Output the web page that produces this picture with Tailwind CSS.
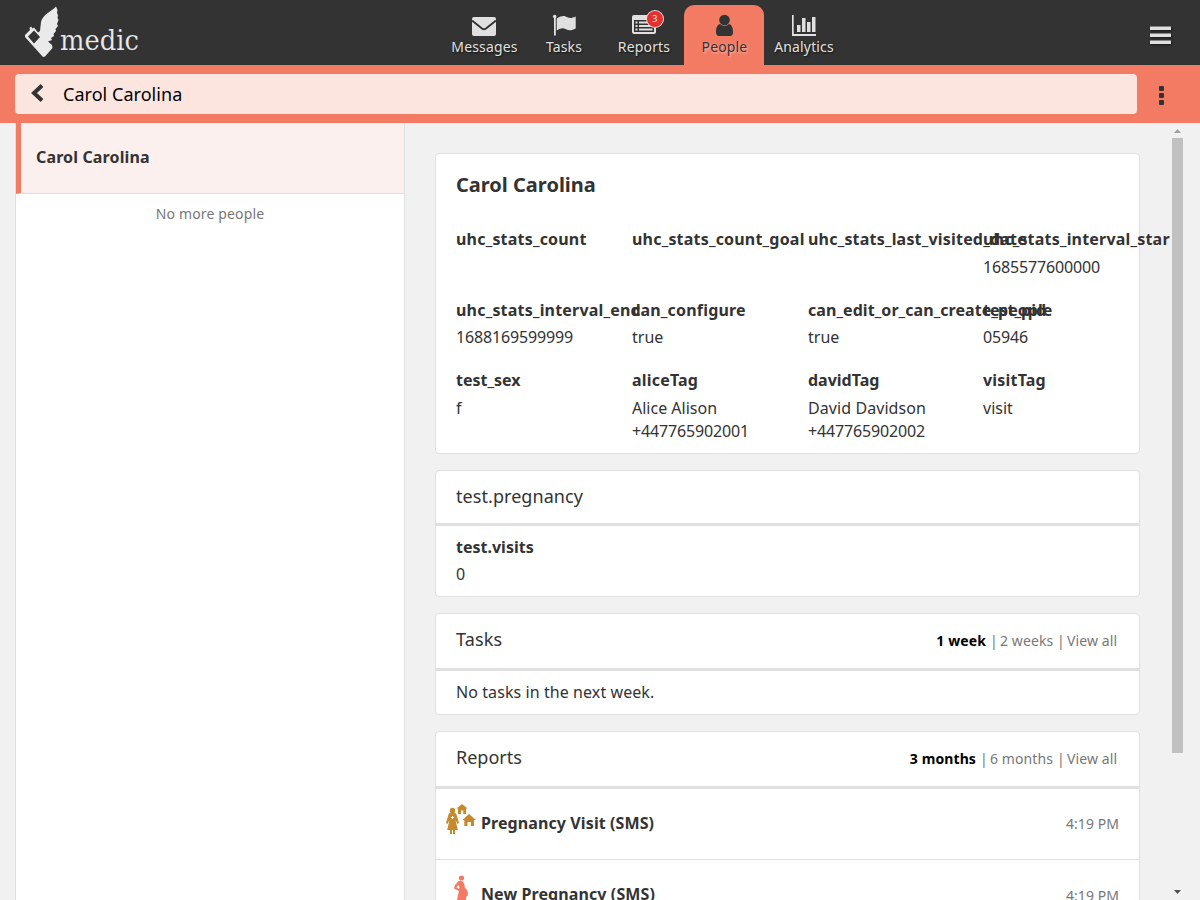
<!DOCTYPE html>
<html lang="en">
<head>
<meta charset="utf-8">
<title>Medic</title>
<script src="https://cdn.jsdelivr.net/npm/@tailwindcss/browser@4"></script>
</head>
<body class="w-[1200px] h-[900px] overflow-hidden bg-[#f1f1f1] text-[#333] text-base leading-[23px] font-['Noto_Sans',sans-serif] flex flex-col">
<header class="relative h-[65px] shrink-0 bg-[#333] text-[#e0e0e0]">
  <svg class="absolute left-0 top-0" width="150" height="65" viewBox="0 0 150 65" fill="#eaeaea">
    <path d="M56 6.500C51 12 43 14 41 22L40 31L38 32.500L34 27.500L32.500 28.500L31 26.500L29.500 28L30 30L25 35L25 37L43 57L45 56.500L52.500 48L52 45L48 41.500L52 40L51 38L54 36L53.500 34L56 31L55.500 29L58 26L57 24L58.500 20L57.500 18L58 15L57 13L57.500 10ZM34 30.500L40 37L34 43.500L28 36.500Z" fill-rule="evenodd"/>
    <text x="60" y="50" font-size="27" textLength="79" lengthAdjust="spacingAndGlyphs" font-family="DejaVu Serif, serif" stroke="#333" stroke-width=".15">medic</text>
  </svg>
  <nav class="flex h-full pl-[444px] pt-[5px] text-sm leading-[20px] text-center tracking-[.15px] [text-shadow:1px_1px_2px_rgba(0,0,0,.7)]">
    <a class="w-20 flex flex-col items-center pt-[8px]"><svg class="h-6 w-6 shrink-0" viewBox="0 0 24 24"><rect y="4" width="24" height="19" rx="2" fill="#e0e0e0"/><path d="M0 7.500L10 15.500Q12 17 14 15.500L24 7.500" fill="none" stroke="#333" stroke-width="1.800"/></svg><span class="pl-px">Messages</span></a>
    <a class="w-20 flex flex-col items-center pt-[8px]"><svg class="h-6 w-6 shrink-0" viewBox="0 0 24 24" fill="#e0e0e0"><circle cx="2.700" cy="3.500" r="1.800"/><path d="M2 4h1.800v18.500H2zM4.700 5.500C11 1.500 13 3 15.500 4.300S20 5 23.700 3.500V15.500C20 17.500 17 18 14 16.300S9 15 4.700 17.500Z"/></svg>Tasks</a>
    <a class="relative w-20 flex flex-col items-center pt-[8px]"><svg class="h-6 w-6 shrink-0" viewBox="0 0 24 24"><path fill="#e0e0e0" fill-rule="evenodd" d="M2 2H22Q24 2 24 4V19Q24 21 22 21H2Q0 21 0 19V4Q0 2 2 2ZM2 7V19H22V7Z"/><path fill="#e0e0e0" d="M3.500 8.500h2v2h-2zM3.500 12h2v2h-2zM3.500 15.500h2v2h-2zM7 8.500h13.500v2H7zM7 12h13.500v2H7zM7 15.500h13.500v2H7z"/></svg>Reports<span class="absolute left-[42px] top-[5px] size-[18px] rounded-full bg-[#e33030] border border-white/80 text-white/90 text-[9px] leading-[16px] [text-shadow:none]">3</span></a>
    <a class="w-20 flex flex-col items-center pt-[8px] rounded-t-[10px] bg-[#f47b63] text-[#333] [text-shadow:1px_1px_2px_rgba(255,255,255,.5)]"><svg class="h-6 w-6 shrink-0" viewBox="0 0 24 24" fill="#333"><circle cx="12.500" cy="7" r="5.300"/><path d="M8 11Q12.500 15 17 11C20 12 21 15 21 19Q21 23 18 23H7Q4 23 4 19C4 15 5 12 8 11Z"/></svg><span class="pl-px">People</span></a>
    <a class="w-20 flex flex-col items-center pt-[8px]"><svg class="h-6 w-6 shrink-0" viewBox="0 0 24 24" fill="#e0e0e0"><path d="M0 2h1.700v19H24v2H0zM5 12h3.500v7H5zM10 5h3.500v14H10zM15 9h3.500v10H15zM20 4h3.500v15H20z"/></svg>Analytics</a>
  </nav>
  <svg class="absolute left-[1150px] top-[26px] drop-shadow-[1px_1px_1px_#0008]" width="22" height="20" fill="#e0e0e0"><path d="M0 .5h21v3.500H0zM0 7.500h21V11H0zM0 14.500h21V18H0z"/></svg>
</header>
<section class="h-[58px] shrink-0 bg-[#f47b63] flex pl-[15px] pt-[9px]">
  <div class="w-[1122px] h-10 rounded bg-[#fde5df] flex items-center text-lg text-black pl-[16px] tracking-[.04px]">
    <svg class="mr-[19px] -mt-[2px] shrink-0" width="13" height="18" viewBox="0 0 13 18"><path d="M11 1.500L3 9L11 16.500" fill="none" stroke="#333" stroke-width="4"/></svg>Carol Carolina
  </div>
  <svg class="ml-[22px] mt-[12px]" width="5" height="20" fill="#333"><rect width="5" height="5" rx="1"/><rect y="7" width="5" height="5" rx="1"/><rect y="14" width="5" height="5" rx="1"/></svg>
</section>
<main class="flex h-[777px] pl-[15px]">
  <aside class="w-[390px] shrink-0 bg-white border-x border-[#e0e0e0]">
    <div class="h-[71px] bg-[#fcf0ee] border-b border-b-[#e0e0e0] border-l-[5px] border-l-[#f47b63] pl-[15px] pt-[23px] font-bold tracking-[.14px]">Carol Carolina</div>
    <p class="pt-[10px] text-center text-sm leading-5 text-[#777] tracking-[.14px]">No more people</p>
  </aside>
  <div class="w-[767px] h-full overflow-hidden pl-[30px] pt-[30px] shrink-0">
    <section class="w-[705px] h-[301px] border border-[#e0e0e0] rounded bg-white px-5 pt-[19px] mb-4">
      <h2 class="text-xl leading-6 font-bold">Carol Carolina</h2>
      <dl class="mt-[31px] grid grid-cols-[176px_176px_175px_187px] auto-rows-[70.5px] [&_dt]:font-bold [&_dt]:mb-[5px] [&_dt]:tracking-[.19px] whitespace-nowrap">
        <div><dt>uhc_stats_count</dt></div>
        <div><dt>uhc_stats_count_goal</dt></div>
        <div><dt>uhc_stats_last_visited_date</dt></div>
        <div class="overflow-hidden"><dt>uhc_stats_interval_star</dt><dd class="tracking-[-.15px]">1685577600000</dd></div>
        <div><dt>uhc_stats_interval_end</dt><dd class="-mt-px tracking-[-.15px]">1688169599999</dd></div>
        <div><dt>can_configure</dt><dd class="-mt-px">true</dd></div>
        <div><dt class="tracking-[.06px]!">can_edit_or_can_create_people</dt><dd class="-mt-px">true</dd></div>
        <div><dt class="tracking-normal!">test_pid</dt><dd class="-mt-px tracking-[-.15px]">05946</dd></div>
        <div><dt class="tracking-normal!">test_sex</dt><dd>f</dd></div>
        <div><dt>aliceTag</dt><dd>Alice Alison<br><span class="tracking-[-.15px]">+447765902001</span></dd></div>
        <div><dt class="tracking-normal!">davidTag</dt><dd><span class="tracking-[.08px]">David Davidson</span><br><span class="tracking-[-.15px]">+447765902002</span></dd></div>
        <div><dt>visitTag</dt><dd>visit</dd></div>
      </dl>
    </section>
    <section class="w-[705px] h-[127px] border border-[#e0e0e0] rounded bg-white mb-4">
      <h3 class="h-[55px] border-b-3 border-[#e0e0e0] pl-5 pt-[13px] text-lg leading-6 tracking-[.06px]">test.pregnancy</h3>
      <div class="pl-5 pt-[10px]"><p class="font-bold mb-1">test.visits</p><p>0</p></div>
    </section>
    <section class="w-[705px] h-[102px] border border-[#e0e0e0] rounded bg-white mb-4">
      <div class="h-[57px] border-b-3 border-[#e0e0e0] pl-5 pr-[21px] pt-[13px] flex justify-between">
        <h3 class="text-lg leading-6 tracking-[.15px]">Tasks</h3>
        <p class="text-sm leading-7 text-[#777] flex whitespace-nowrap tracking-[.1px]"><b class="text-black mr-[4px]">1 week</b><span class="w-[10px]">|</span><span class="w-[53px] mr-[4px]">2 weeks</span><span class="w-[10px]">|</span><span class="w-[51px]">View all</span></p>
      </div>
      <p class="pl-5 pt-[10px] tracking-[.08px]">No tasks in the next week.</p>
    </section>
    <section class="w-[705px] h-[240px] border border-[#e0e0e0] rounded bg-white">
      <div class="h-[57px] border-b-3 border-[#e0e0e0] pl-5 pr-[21px] pt-[13px] flex justify-between">
        <h3 class="text-lg leading-6">Reports</h3>
        <p class="text-sm leading-7 text-[#777] flex whitespace-nowrap tracking-[.1px]"><b class="text-black mr-[4px]">3 months</b><span class="w-[10px]">|</span><span class="w-[63px] mr-[4px]">6 months</span><span class="w-[10px]">|</span><span class="w-[51px]">View all</span></p>
      </div>
      <div class="h-[71px] border-b border-[#e0e0e0] flex items-center pl-[10px] pr-5">
        <svg class="mr-[5px] -mt-[10px]" width="30" height="30" viewBox="0 0 30 30" fill="#c78a2b"><circle cx="6.500" cy="6.500" r="2.700"/><path d="M4.500 8.500H8.500Q10.500 9 11.200 13L13 19L11.500 20L9.500 16L11.800 26H9V30H7V26H6V30H4V26H1.200L3.500 16L1.500 20L0 19L1.800 13Q2.500 9 4.500 8.500ZM16 0L21.500 4.500H20V10H17.300V6.500H15V10H12V4.500H10.500ZM23 10L30 16H28V22H24.800V18H21.500V22H18.300V16H16.500Z"/><path fill="white" d="M6 12h1v1h1v1H7v1H6v-1H5v-1h1z"/></svg>
        <span class="font-bold grow -mt-[2px] tracking-[.1px]">Pregnancy Visit (SMS)</span><span class="text-sm text-[#777] tracking-[.06px]">4:19 PM</span>
      </div>
      <div class="h-[71px] flex items-center pl-[10px] pr-5">
        <svg class="mr-[5px] -mt-[12px]" width="30" height="30" viewBox="0 0 30 30" fill="#f47b63"><circle cx="15.500" cy="3" r="2.600"/><path fill-rule="evenodd" d="M12.500 6Q16 5 18 8L19 13Q22 15 22 18Q22 21 20 22V30H10L12 20L13 16L8 13.500L9 10ZM12 10L10.500 12.500L13 14L13.500 12Z"/></svg>
        <span class="font-bold grow -mt-[2px] tracking-[.1px]">New Pregnancy (SMS)</span><span class="text-sm text-[#777] tracking-[.06px]">4:19 PM</span>
      </div>
    </section>
  </div>
  <div class="w-[11px] flex flex-col items-center pt-[6px]">
    <svg width="7" height="4"><path d="M0 4L3.500 0L7 4Z" fill="#a3a3a3"/></svg>
    <div class="w-[11px] h-[615px] mt-[5px] bg-[#c1c1c1]"></div>
    <svg class="mt-auto mb-[6px]" width="7" height="4"><path d="M0 0L3.500 4L7 0Z" fill="#505050"/></svg>
  </div>
</main>
</body>
</html>
